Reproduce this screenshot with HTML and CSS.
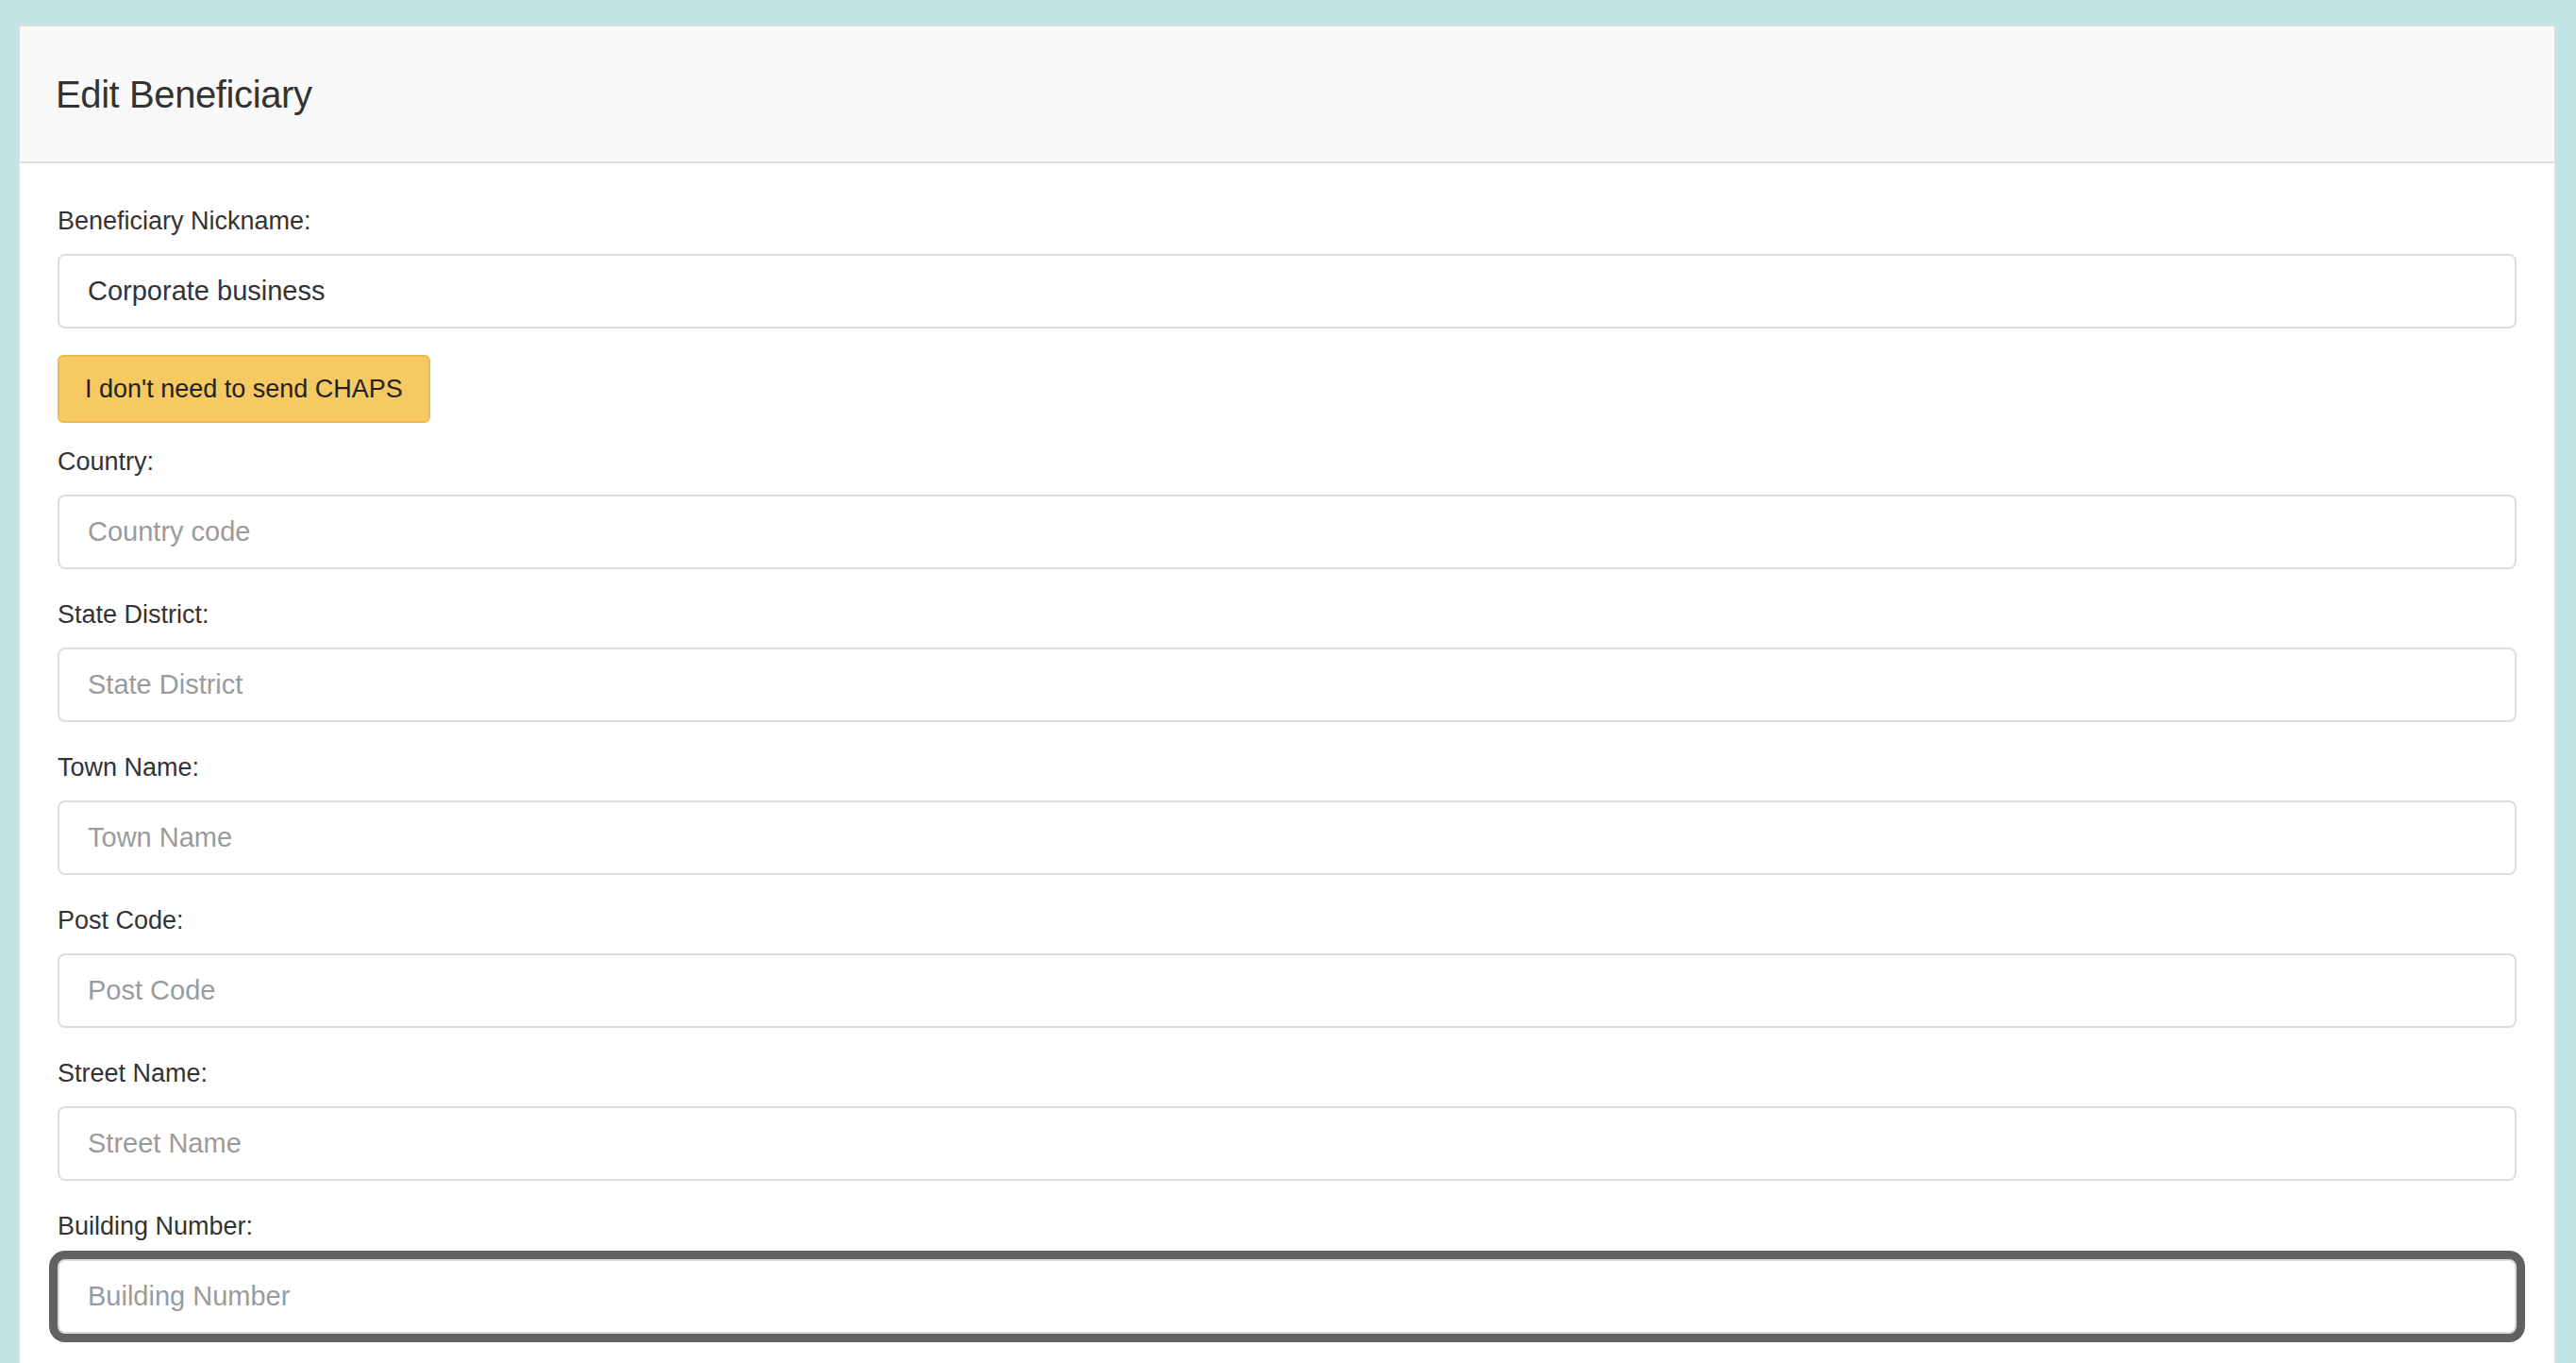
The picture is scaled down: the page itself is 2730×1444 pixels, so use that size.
FILE: index.html
```html
<!DOCTYPE html>
<html lang="en">
<head>
<meta charset="utf-8">
<title>Edit Beneficiary</title>
<link rel="stylesheet" href="styles.css">
</head>
<body>
<div class="card">
  <div class="card-header">
    <h1 class="card-title">Edit Beneficiary</h1>
  </div>
  <form class="card-body">
    <div class="field">
      <label class="field-label" for="nick">Beneficiary Nickname:</label>
      <input class="field-input" id="nick" type="text" value="Corporate business">
    </div>
    <button type="button" class="btn-warning">I don't need to send CHAPS</button>
    <div class="field">
      <label class="field-label" for="country">Country:</label>
      <input class="field-input" id="country" type="text" placeholder="Country code">
    </div>
    <div class="field">
      <label class="field-label" for="state">State District:</label>
      <input class="field-input" id="state" type="text" placeholder="State District">
    </div>
    <div class="field">
      <label class="field-label" for="town">Town Name:</label>
      <input class="field-input" id="town" type="text" placeholder="Town Name">
    </div>
    <div class="field">
      <label class="field-label" for="post">Post Code:</label>
      <input class="field-input" id="post" type="text" placeholder="Post Code">
    </div>
    <div class="field">
      <label class="field-label" for="street">Street Name:</label>
      <input class="field-input" id="street" type="text" placeholder="Street Name">
    </div>
    <div class="field">
      <label class="field-label" for="building">Building Number:</label>
      <input class="field-input is-focused" id="building" type="text" placeholder="Building Number">
    </div>
  </form>
</div>
</body>
</html>
```

FILE: styles.css
```css
html, body {
  margin: 0;
}

body {
  background: #c2e6e5;
  padding: 26px 21px 0 19px;
  font-family: "Liberation Sans", Arial, sans-serif;
  color: #333333;
}

.card {
  background: #ffffff;
  border: 2px solid #dddddd;
  border-radius: 5px;
  overflow: hidden;
}

.card-header {
  background: #f9f9f9;
  border-bottom: 2px solid #dddddd;
  padding: 48px 38px 47px 38px;
}

.card-title {
  margin: 0;
  font-size: 40px;
  line-height: 48px;
  font-weight: 400;
  letter-spacing: -0.4px;
  color: #333333;
}

.card-body {
  display: flex;
  flex-direction: column;
  align-items: flex-start;
  padding: 41px 40px 60px 40px;
}

.field {
  display: flex;
  flex-direction: column;
  align-self: stretch;
  margin-bottom: 28px;
}

.field-label {
  font-size: 27px;
  line-height: 40px;
  color: #333333;
  margin-bottom: 15px;
}

.field-input {
  box-sizing: border-box;
  height: 79px;
  width: 100%;
  margin: 0;
  padding: 0 30px;
  border: 2px solid #dddddd;
  border-radius: 8px;
  background: #ffffff;
  font-family: "Liberation Sans", Arial, sans-serif;
  font-size: 29px;
  color: #333333;
  outline: none;
}

.field-input::placeholder {
  color: #9b9b9b;
  opacity: 1;
}

.field-input.is-focused {
  box-shadow: 0 0 0 9px #616161;
}

.btn-warning {
  box-sizing: border-box;
  height: 72px;
  margin: 0 0 21px 0;
  padding: 0 27px;
  background: #f6c963;
  border: 2px solid #ecbb4f;
  border-radius: 6px;
  font-family: "Liberation Sans", Arial, sans-serif;
  font-size: 27px;
  color: #222222;
  cursor: pointer;
}
```
